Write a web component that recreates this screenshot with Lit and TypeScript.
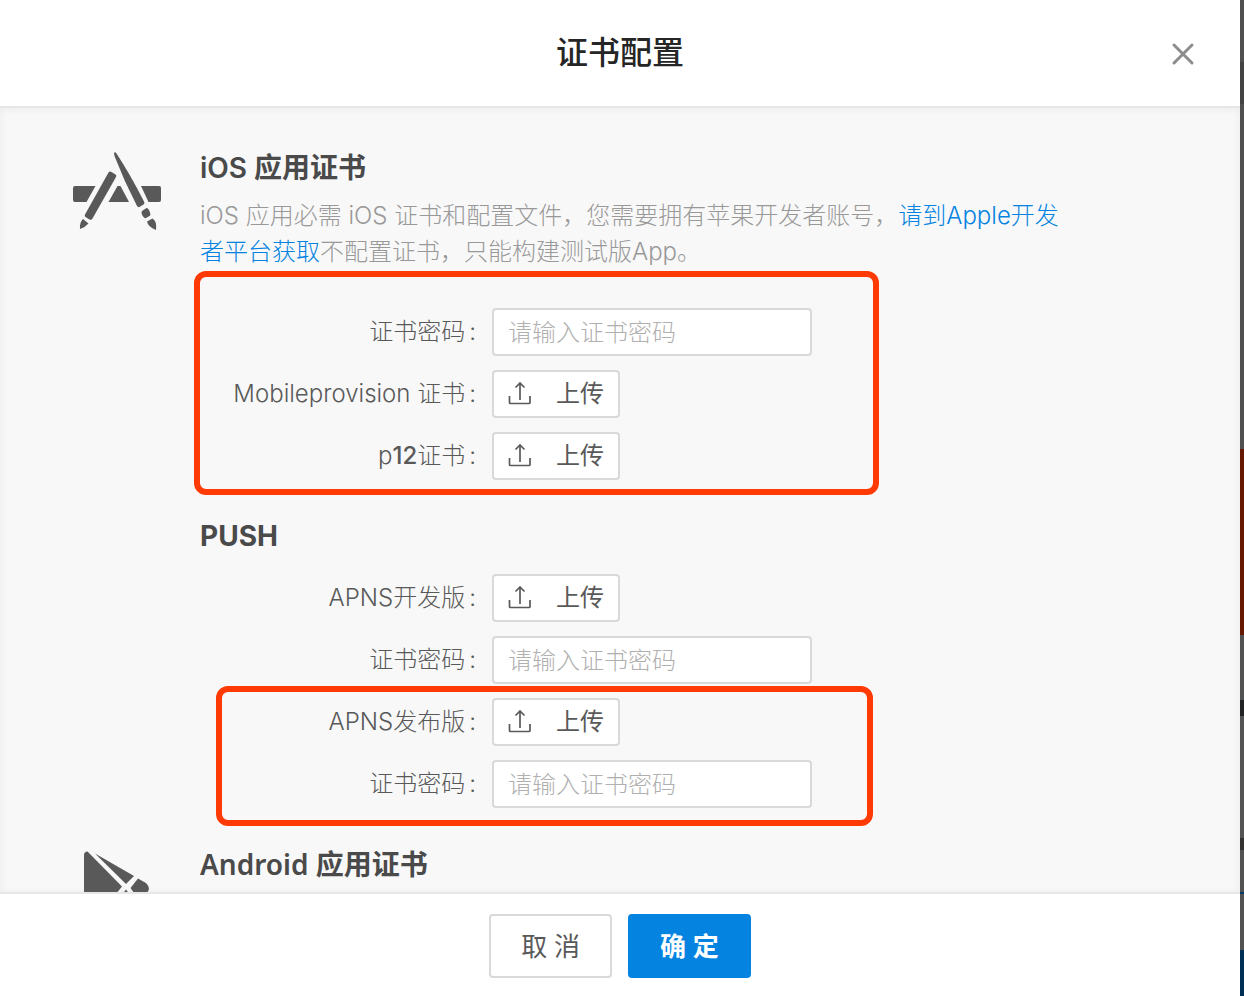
import { LitElement, html, css, svg } from "lit";
import type { TemplateResult } from "lit";
import { customElement } from "lit/decorators.js";

interface Field {
  id: string;
  label: TemplateResult;
  kind: "password" | "upload";
}

const passwordLabel = html`证书密码`;

const signing: Field[] = [
  { id: "ios-password", label: passwordLabel, kind: "password" },
  { id: "mobileprovision", label: html`<span class="latin">Mobileprovision</span> 证书`, kind: "upload" },
  { id: "p12", label: html`<span class="latin">p<b>12</b></span>证书`, kind: "upload" },
];

const pushDev: Field[] = [
  { id: "apns-dev", label: html`<span class="latin">APNS</span>开发版`, kind: "upload" },
  { id: "apns-dev-password", label: passwordLabel, kind: "password" },
];

const pushRelease: Field[] = [
  { id: "apns-release", label: html`<span class="latin">APNS</span>发布版`, kind: "upload" },
  { id: "apns-release-password", label: passwordLabel, kind: "password" },
];

const appStoreIcon = svg`
  <svg class="logo" width="88" height="78" viewBox="0 0 88 78" fill="#595959" aria-hidden="true">
    <path d="M2 34H22.500L13.500 50H2Q0 50 0 48V36Q0 34 2 34Z"/>
    <path d="M46 34H47.500L56 50H35.500L44.500 34Z"/>
    <path d="M68 34H86Q88 34 88 36V48Q88 50 86 50H75.500Z"/>
    <path d="M35.500 20.500Q36.500 19 38.500 20L42.500 22.500Q44 23.500 43 25L19.500 66.500Q18.500 68.500 16.500 67.500L12.500 65Q11 64 12 62.500Z"/>
    <path d="M10 67L15.500 71.500Q12 75.500 7 77Q6.500 70 10 67Z"/>
    <path d="M41 1Q42-.5 43.500 1.500Q57 22 71 49.500Q72 51.500 70.500 52.500L66.500 55Q65 55.500 64 54Q51 29 41.500 4Q41 2 41 1Z"/>
    <path d="M69 59L73.500 56Q75.500 56 77 60.500Q78 63 76.500 64L73 66Q71.500 66.500 70.500 65Q67.500 61 69 59Z"/>
    <path d="M74 69.500L79.500 66.500Q84 69 83 78Q75 75 74 69.500Z"/>
  </svg>`;

const playIcon = svg`
  <svg class="logo" width="66" height="80" viewBox="0 0 66 80" fill="#595959" aria-hidden="true">
    <path d="M0 4Q0 .5 3.500 .5L38 35.500L3 79Q0 78 0 75Z"/>
    <path d="M11 2.500L50 25L42 33Z"/>
    <path d="M54 27.500L62 32Q66 36 64.500 39.500Q64 41 60 44L54 47.500L46.500 37Z"/>
    <path d="M42 38.500L50 49.500L11 78Z"/>
  </svg>`;

const uploadIcon = svg`
  <svg width="24" height="24" viewBox="0 0 24 24" fill="none" stroke="#595959" stroke-width="1.7" aria-hidden="true">
    <path d="M1.500 14V20.500Q1.500 21.500 2.500 21.500H21Q22 21.500 22 20.500V14M12 18V1.500M7.500 5.500L12 1L16.500 5.500"/>
  </svg>`;

@customElement("app-root")
export class AppRoot extends LitElement {
  static styles = css`
    :host {
      display: block;
      color: #595959;
      font: 24px/36px Inter, "Noto Sans CJK SC", sans-serif;
    }
    * { box-sizing: border-box; }
    .backdrop {
      height: 100vh;
      padding-right: 4px;
      background: linear-gradient(
        #505050 0 62px, #434343 62px 104px, #505050 104px 449px,
        #661800 449px 635px, #525252 635px 700px, #202224 700px 716px,
        #545454 716px 838px, #343230 838px 850px, #525252 850px 892px,
        #003a66 892px 894px, #525252 894px 950px, #002f55 950px);
    }
    .dialog {
      height: 100%;
      display: flex;
      flex-direction: column;
      background: #fff;
    }
    .head {
      display: grid;
      grid-template-columns: 1fr auto 1fr;
      align-items: center;
      height: 108px;
      padding: 0 44px;
      border-bottom: 2px solid #e6e6e6;
    }
    .head h1 {
      grid-column: 2;
      margin: 0;
      color: #262626;
      font-size: 32px;
      line-height: 48px;
      font-weight: 500;
    }
    button { font: inherit; color: inherit; cursor: pointer; }
    .close {
      justify-self: end;
      display: flex;
      padding: 2px 0 0;
      border: 0;
      background: none;
    }
    .body {
      flex: 1;
      min-height: 0;
      overflow: hidden;
      padding: 38px 160px 0 34px;
      background: #f8f8f8;
      box-shadow: inset 0 1px 8px rgba(0, 0, 0, 0.06);
    }
    .section {
      display: grid;
      grid-template-columns: 166px minmax(0, 1fr);
      margin-bottom: 34px;
    }
    .logo { display: block; margin: 6px auto 0; }
    .play .logo { margin-top: 9px; }
    h2 {
      margin: 0;
      color: #4a4a4a;
      font-size: 28px;
      line-height: 44px;
      font-weight: 600;
    }
    .play h2 { font-family: "Noto Sans", "Noto Sans CJK SC", sans-serif; }
    .latin { font-weight: 350; }
    .latin b { font-weight: 500; }
    .intro { margin: 8px 0 38px; color: #999; font-weight: 300; }
    .intro a { color: #0583e0; text-decoration: none; }
    .push { margin: 34px 0 16px; font-weight: 700; }
    .rows { position: relative; display: grid; gap: 14px; }
    .rows + .rows { margin-top: 14px; }
    .row {
      display: grid;
      grid-template-columns: 276px minmax(0, 320px);
      column-gap: 16px;
      align-items: center;
      justify-items: start;
    }
    label { justify-self: end; font-weight: 300; white-space: nowrap; color: #595959; }
    label::after { content: ":"; margin-left: 4px; font-weight: 350; }
    input {
      width: 100%;
      height: 48px;
      padding: 0 14px;
      border: 2px solid #d9d9d9;
      border-radius: 4px;
      background: #fff;
      font: inherit;
      font-weight: 300;
    }
    input::placeholder { color: #b0b0b0; opacity: 1; }
    .upload {
      display: flex;
      align-items: center;
      gap: 24px;
      height: 48px;
      padding: 0 14px;
      border: 2px solid #d9d9d9;
      border-radius: 4px;
      background: #fff;
    }
    .mark {
      position: absolute;
      border: 6px solid #ff3a05;
      border-radius: 12px;
      pointer-events: none;
    }
    .mark-signing { inset: -37px auto -15px -6px; width: 685px; }
    .mark-release { inset: -12px auto -18px 16px; width: 657px; }
    .foot {
      display: flex;
      justify-content: center;
      gap: 16px;
      padding: 20px 0 18px;
      border-top: 2px solid #e6e6e6;
    }
    .action {
      height: 64px;
      padding: 0 30px;
      border: 2px solid #d9d9d9;
      border-radius: 4px;
      background: #fff;
      font-family: "Noto Sans", "Noto Sans CJK SC", sans-serif;
      font-size: 26px;
    }
    .primary { border-color: #0583e0; background: #0583e0; color: #fff; font-weight: 600; }
  `;

  private row(f: Field) {
    return html`
      <div class="row">
        <label for=${f.id}>${f.label}</label>
        ${f.kind === "password"
          ? html`<input id=${f.id} type="password" placeholder="请输入证书密码" />`
          : html`<button id=${f.id} class="upload" type="button">${uploadIcon}<span>上传</span></button>`}
      </div>`;
  }

  render() {
    return html`
      <div class="backdrop">
        <div class="dialog" role="dialog" aria-labelledby="title">
          <header class="head">
            <h1 id="title">证书配置</h1>
            <button class="close" type="button" aria-label="关闭">
              <svg width="26" height="26" viewBox="0 0 26 26" stroke="#8c8c8c" stroke-width="3" stroke-linecap="round">
                <path d="M4 4L22 22M22 4L4 22" />
              </svg>
            </button>
          </header>
          <main class="body">
            <section class="section">
              <div>${appStoreIcon}</div>
              <div>
                <h2>iOS 应用证书</h2>
                <p class="intro"><span class="latin">iOS</span> 应用必需 <span class="latin">iOS</span> 证书和配置文件，您需要拥有苹果开发者账号，<a href="#apple">请到<span class="latin">Apple</span>开发者平台获取</a>不配置证书，只能构建测试版<span class="latin">App</span>。</p>
                <div class="rows">
                  ${signing.map((f) => this.row(f))}
                  <div class="mark mark-signing"></div>
                </div>
                <h2 class="push">PUSH</h2>
                <div class="rows">${pushDev.map((f) => this.row(f))}</div>
                <div class="rows">
                  ${pushRelease.map((f) => this.row(f))}
                  <div class="mark mark-release"></div>
                </div>
              </div>
            </section>
            <section class="section play">
              <div>${playIcon}</div>
              <h2>Android 应用证书</h2>
            </section>
          </main>
          <footer class="foot">
            <button class="action" type="button">取 消</button>
            <button class="action primary" type="button">确 定</button>
          </footer>
        </div>
      </div>`;
  }
}
